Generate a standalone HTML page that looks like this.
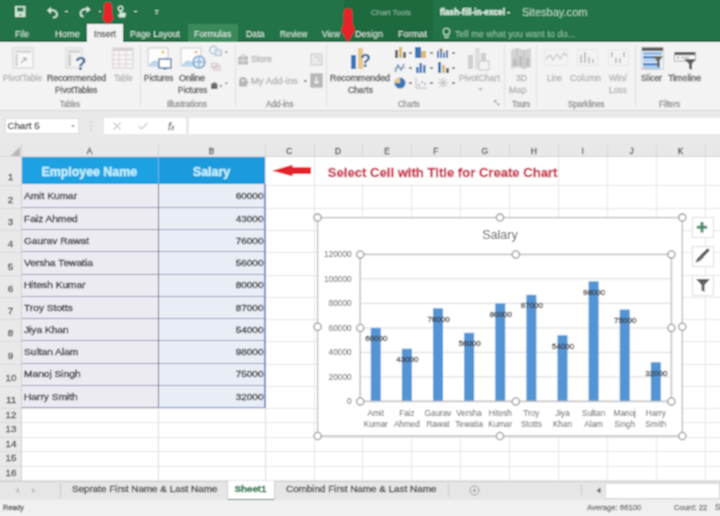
<!DOCTYPE html>
<html><head><meta charset="utf-8"><style>
html,body{margin:0;padding:0;width:720px;height:516px;overflow:hidden;background:#fff;font-family:"Liberation Sans", sans-serif;}
#root{position:relative;width:720px;height:516px;overflow:hidden;filter:url(#bl);}
#root div{-webkit-text-stroke:0.3px currentColor;}
</style></head><body><svg width="0" height="0" style="position:absolute"><filter id="bl" x="0" y="0" width="720" height="516" filterUnits="userSpaceOnUse"><feConvolveMatrix order="3" kernelMatrix="1 2 1 2 4 2 1 2 1" divisor="16" edgeMode="duplicate"/></filter></svg><div id="root">
<div style="position:absolute;left:0px;top:0px;width:720px;height:41.5px;background:#217346"></div><div style="position:absolute;left:0px;top:40px;width:720px;height:1.5px;background:#1c6840"></div><div style="position:absolute;left:344px;top:0px;width:89px;height:41.5px;background:#1d6a3e"></div><svg style="position:absolute;left:14px;top:5px;" width="13" height="13" viewBox="0 0 13 13"><rect x="1" y="1" width="10.5" height="11" fill="#cfe6d6"/><rect x="3" y="2.5" width="6.5" height="4" fill="#2a7a4e"/><rect x="5.5" y="9" width="2" height="1.5" fill="#2a7a4e"/></svg><svg style="position:absolute;left:45px;top:5px;" width="14" height="14" viewBox="0 0 14 14"><path d="M2 5.5 L6 2 L6 9 Z" fill="#d3e8da"/><path d="M5 5.5 C9 4.5 12 6.5 12 9 C12 11.5 10 12.5 8 12.5" fill="none" stroke="#d3e8da" stroke-width="1.8"/></svg><div style="position:absolute;left:65px;top:11px;width:2.5px;height:1.2px;background:#c5dfce"></div><svg style="position:absolute;left:79px;top:5px;" width="13" height="13" viewBox="0 0 13 13"><path d="M11.5 4.5 L7.5 1 L7.5 8 Z" fill="#d3e8da"/><path d="M8.5 4.5 C4.5 3.5 1.5 5.5 1.5 8 C1.5 10.5 3 11.5 4.5 11.5" fill="none" stroke="#d3e8da" stroke-width="1.8"/></svg><div style="position:absolute;left:98.5px;top:11px;width:2.5px;height:1.2px;background:#c5dfce"></div><svg style="position:absolute;left:115.5px;top:4.5px;" width="11" height="13" viewBox="0 0 11 13"><circle cx="4.5" cy="3.5" r="2.3" fill="none" stroke="#d3e8da" stroke-width="1.3"/><path d="M3.5 5 V10 L1.5 9 L3 12.5 H9 L10 9 Q10 7.5 8 7.5 H5.5 V5 Z" fill="#d3e8da"/></svg><div style="position:absolute;left:133.5px;top:11px;width:3px;height:1.2px;background:#c5dfce"></div><svg style="position:absolute;left:154.5px;top:9.5px;" width="4" height="5" viewBox="0 0 4 5"><rect x="0" y="0" width="3.5" height="1" fill="#c5dfce"/><path d="M0 2.5 L3.5 2.5 L1.75 4.5 Z" fill="#c5dfce"/></svg><div style="position:absolute;left:371.0px;top:8.24px;line-height:9.53px;font-size:7.94px;color:#92c2a3;font-weight:400;white-space:nowrap;-webkit-text-stroke:0;">Chart Tools</div><div style="position:absolute;left:440.0px;top:7.56px;line-height:9.89px;font-size:8.24px;color:#e3f1e8;font-weight:700;white-space:nowrap;">flash-fill-in-excel -</div><div style="position:absolute;left:522.0px;top:6.37px;line-height:13.26px;font-size:11.05px;color:#b9dcc5;font-weight:400;white-space:nowrap;-webkit-text-stroke:0;">Sitesbay.com</div><div style="position:absolute;left:15.0px;top:28.60px;line-height:10.80px;font-size:9.0px;color:#e8f3ec;font-weight:400;white-space:nowrap;-webkit-text-stroke:0;transform:scaleX(0.9662);transform-origin:0 50%;">File</div><div style="position:absolute;left:54.5px;top:28.60px;line-height:10.80px;font-size:9.0px;color:#e8f3ec;font-weight:400;white-space:nowrap;-webkit-text-stroke:0;transform:scaleX(1.0404);transform-origin:0 50%;">Home</div><div style="position:absolute;left:87px;top:23.5px;width:36px;height:19px;background:#f3f3f3"></div><div style="position:absolute;left:94.0px;top:28.60px;line-height:10.80px;font-size:9.0px;color:#555;font-weight:400;white-space:nowrap;transform:scaleX(0.9778);transform-origin:0 50%;">Insert</div><div style="position:absolute;left:130.0px;top:28.60px;line-height:10.80px;font-size:9.0px;color:#e8f3ec;font-weight:400;white-space:nowrap;-webkit-text-stroke:0;transform:scaleX(0.9885);transform-origin:0 50%;">Page Layout</div><div style="position:absolute;left:187.5px;top:24px;width:50.5px;height:17.5px;background:#3b8a5c"></div><div style="position:absolute;left:193.75px;top:28.60px;line-height:10.80px;font-size:9.0px;color:#e8f3ec;font-weight:400;white-space:nowrap;-webkit-text-stroke:0;transform:scaleX(0.9925);transform-origin:0 50%;">Formulas</div><div style="position:absolute;left:246.0px;top:28.60px;line-height:10.80px;font-size:9.0px;color:#e8f3ec;font-weight:400;white-space:nowrap;-webkit-text-stroke:0;transform:scaleX(0.9696);transform-origin:0 50%;">Data</div><div style="position:absolute;left:279.5px;top:28.60px;line-height:10.80px;font-size:9.0px;color:#e8f3ec;font-weight:400;white-space:nowrap;-webkit-text-stroke:0;transform:scaleX(0.9287);transform-origin:0 50%;">Review</div><div style="position:absolute;left:322.0px;top:28.60px;line-height:10.80px;font-size:9.0px;color:#e8f3ec;font-weight:400;white-space:nowrap;-webkit-text-stroke:0;transform:scaleX(0.9259);transform-origin:0 50%;">View</div><div style="position:absolute;left:355.0px;top:28.60px;line-height:10.80px;font-size:9.0px;color:#e8f3ec;font-weight:400;white-space:nowrap;-webkit-text-stroke:0;transform:scaleX(1.0004);transform-origin:0 50%;">Design</div><div style="position:absolute;left:398.0px;top:28.60px;line-height:10.80px;font-size:9.0px;color:#e8f3ec;font-weight:400;white-space:nowrap;-webkit-text-stroke:0;transform:scaleX(1.0165);transform-origin:0 50%;">Format</div><svg style="position:absolute;left:442px;top:27px;" width="9" height="13" viewBox="0 0 9 13"><circle cx="4.5" cy="4.5" r="3.3" fill="none" stroke="#bfe0cb" stroke-width="1.1"/><path d="M3 8 L3 10.5 L6 10.5 L6 8" fill="none" stroke="#bfe0cb" stroke-width="1.1"/></svg><div style="position:absolute;left:455.0px;top:28.60px;line-height:10.80px;font-size:9.0px;color:#98c6a9;font-weight:400;white-space:nowrap;-webkit-text-stroke:0;transform:scaleX(1.0124);transform-origin:0 50%;">Tell me what you want to do...</div><div style="position:absolute;left:0px;top:41.5px;width:720px;height:68.5px;background:#f3f3f3"></div><div style="position:absolute;left:0px;top:109.5px;width:720px;height:1px;background:#d6d6d6"></div><div style="position:absolute;left:139.5px;top:45px;width:1px;height:62px;background:#e0e0e0"></div><div style="position:absolute;left:235px;top:45px;width:1px;height:62px;background:#e0e0e0"></div><div style="position:absolute;left:326px;top:45px;width:1px;height:62px;background:#e0e0e0"></div><div style="position:absolute;left:503.5px;top:45px;width:1px;height:62px;background:#e0e0e0"></div><div style="position:absolute;left:536px;top:45px;width:1px;height:62px;background:#e0e0e0"></div><div style="position:absolute;left:635px;top:45px;width:1px;height:62px;background:#e0e0e0"></div><svg style="position:absolute;left:12px;top:47px;" width="22" height="22" viewBox="0 0 22 22"><rect x="1" y="1" width="20" height="20" fill="#f7f7f7" stroke="#cfcfcf"/><rect x="3" y="3" width="16" height="3" fill="#d8d8d8"/><rect x="3" y="7" width="3" height="12" fill="#d8d8d8"/><path d="M9 16 L14 11 M11 11 L14 11 L14 14" stroke="#bdbdbd" stroke-width="1.5" fill="none"/></svg><div style="position:absolute;left:3.3px;top:73.10px;line-height:10.80px;font-size:9.0px;color:#b3b3b3;font-weight:400;white-space:nowrap;transform:scaleX(0.9448);transform-origin:0 50%;">PivotTable</div><svg style="position:absolute;left:65px;top:47px;" width="24" height="23" viewBox="0 0 24 23"><rect x="1" y="1" width="16" height="20" fill="#f3f3f3" stroke="#d3d3d3"/><rect x="3" y="3" width="12" height="3" fill="#d6d6d6"/><rect x="3" y="7" width="3" height="12" fill="#cfcfcf"/><text x="10" y="22.5" font-family="Liberation Sans" font-weight="700" font-size="19" fill="#3f6a94">?</text></svg><div style="position:absolute;left:46.7px;top:73.10px;line-height:10.80px;font-size:9.0px;color:#505050;font-weight:400;white-space:nowrap;transform:scaleX(0.9685);transform-origin:0 50%;">Recommended</div><div style="position:absolute;left:55.0px;top:85.40px;line-height:10.80px;font-size:9.0px;color:#505050;font-weight:400;white-space:nowrap;transform:scaleX(0.9241);transform-origin:0 50%;">PivotTables</div><div style="position:absolute;left:60.0px;top:99.68px;line-height:9.84px;font-size:8.2px;color:#8e8e8e;font-weight:400;white-space:nowrap;transform:scaleX(0.8440);transform-origin:0 50%;">Tables</div><svg style="position:absolute;left:112px;top:47px;" width="22" height="22" viewBox="0 0 22 22"><rect x="1" y="1" width="20" height="20" fill="#f8f5f6" stroke="#d6d0d3"/><rect x="1" y="1" width="20" height="3" fill="#d8d2d5"/><path d="M1 8 H21 M1 12.5 H21 M1 17 H21 M7 1 V21 M14 1 V21" stroke="#ddd3d7" stroke-width="1"/></svg><div style="position:absolute;left:114.0px;top:73.10px;line-height:10.80px;font-size:9.0px;color:#b3b3b3;font-weight:400;white-space:nowrap;transform:scaleX(0.8601);transform-origin:0 50%;">Table</div><svg style="position:absolute;left:147px;top:47px;" width="25" height="23" viewBox="0 0 25 23"><rect x="1" y="1" width="20" height="18" fill="#fdfdfd" stroke="#c9c9c9"/><circle cx="16" cy="5" r="1.5" fill="#e3c26a"/><path d="M2 18 Q7 11 12 15 L20 10 V19 H2 Z" fill="#bcd6ee"/><rect x="12" y="12" width="12" height="9" fill="#fff" stroke="#5b7fa8" stroke-width="1.4"/><rect x="16" y="21" width="4" height="1.5" fill="#5b7fa8"/></svg><div style="position:absolute;left:144.0px;top:73.10px;line-height:10.80px;font-size:9.0px;color:#505050;font-weight:400;white-space:nowrap;transform:scaleX(0.9018);transform-origin:0 50%;">Pictures</div><svg style="position:absolute;left:180px;top:47px;" width="26" height="23" viewBox="0 0 26 23"><rect x="1" y="1" width="20" height="18" fill="#fdfdfd" stroke="#c9c9c9"/><circle cx="16" cy="5" r="1.5" fill="#e3c26a"/><path d="M2 18 Q7 11 12 15 L20 10 V19 H2 Z" fill="#bcd6ee"/><circle cx="19" cy="15" r="6" fill="#d9e8f6" stroke="#6d95c2" stroke-width="1.2"/><path d="M19 9 V21 M13 15 H25" stroke="#6d95c2" stroke-width="0.8"/></svg><div style="position:absolute;left:179.0px;top:73.10px;line-height:10.80px;font-size:9.0px;color:#505050;font-weight:400;white-space:nowrap;transform:scaleX(0.9996);transform-origin:0 50%;">Online</div><div style="position:absolute;left:177.5px;top:85.40px;line-height:10.80px;font-size:9.0px;color:#505050;font-weight:400;white-space:nowrap;transform:scaleX(0.8987);transform-origin:0 50%;">Pictures</div><svg style="position:absolute;left:208px;top:45px;" width="22" height="46" viewBox="0 0 22 46"><circle cx="5.5" cy="5" r="3.8" fill="none" stroke="#b5c6d8" stroke-width="1.4"/><rect x="7" y="5" width="6.5" height="5.5" fill="#dfe7ef" stroke="#b5c6d8" stroke-width="1.2"/><rect x="17" y="6.5" width="2.5" height="1.5" fill="#8a8a8a"/><rect x="3.5" y="18.5" width="6" height="4" fill="none" stroke="#d3bfc8" stroke-width="1.1"/><rect x="6" y="21" width="6" height="4" fill="none" stroke="#d3bfc8" stroke-width="1.1"/><rect x="3" y="38.5" width="6.5" height="5.5" fill="#6a6a6a"/><rect x="5" y="37.5" width="3" height="1.5" fill="#6a6a6a"/><rect x="12" y="40" width="2" height="2" fill="#888"/><rect x="17" y="37.5" width="2.5" height="1.5" fill="#8a8a8a"/></svg><div style="position:absolute;left:166.7px;top:99.68px;line-height:9.84px;font-size:8.2px;color:#8e8e8e;font-weight:400;white-space:nowrap;transform:scaleX(0.9640);transform-origin:0 50%;">Illustrations</div><svg style="position:absolute;left:237px;top:54px;" width="12" height="11" viewBox="0 0 12 11"><path d="M1 3 L11 2 L11 10.5 L1 10.5 Z" fill="#bdbdbd"/><path d="M4 3 Q4 0.5 6 0.5 Q8 0.5 8 2.5" stroke="#bdbdbd" fill="none"/><path d="M6 3 V10.5 M1 6.5 H11" stroke="#e6e6e6" stroke-width="0.8"/></svg><div style="position:absolute;left:250.8px;top:53.60px;line-height:10.80px;font-size:9.0px;color:#b3b3b3;font-weight:400;white-space:nowrap;transform:scaleX(0.9716);transform-origin:0 50%;">Store</div><svg style="position:absolute;left:237px;top:76px;" width="13" height="11" viewBox="0 0 13 11"><path d="M2 10.5 L2 5 Q2 1 6 1 Q10 1 10 5 L12 6 L10 8 L10 10.5 Z" fill="#b5b5b5"/><circle cx="6" cy="4.5" r="1.5" fill="#e0e0e0"/></svg><div style="position:absolute;left:250.8px;top:75.90px;line-height:10.80px;font-size:9.0px;color:#b3b3b3;font-weight:400;white-space:nowrap;transform:scaleX(1.0483);transform-origin:0 50%;">My Add-ins</div><svg style="position:absolute;left:303.5px;top:80px;" width="3" height="3" viewBox="0 0 3 3"><rect x="0" y="0" width="2.5" height="2" fill="#888"/></svg><svg style="position:absolute;left:310px;top:53px;" width="13" height="13" viewBox="0 0 13 13"><rect x="1" y="1" width="11" height="11" fill="#eaeaea" stroke="#c8c8c8"/><path d="M4 4 h5 v5" stroke="#c8c8c8" fill="none"/></svg><svg style="position:absolute;left:310px;top:73px;" width="13" height="15" viewBox="0 0 13 15"><rect x="1" y="1" width="11" height="13" fill="#b9b9b9" stroke="#aaa"/><path d="M6.5 4 v6 M4 8 l2.5 2.5 l2.5 -2.5" stroke="#fff" fill="none"/></svg><div style="position:absolute;left:265.8px;top:99.68px;line-height:9.84px;font-size:8.2px;color:#8e8e8e;font-weight:400;white-space:nowrap;transform:scaleX(0.9893);transform-origin:0 50%;">Add-ins</div><svg style="position:absolute;left:350px;top:47px;" width="24" height="24" viewBox="0 0 24 24"><rect x="1" y="8" width="5" height="14" fill="#3d77b8"/><rect x="8" y="1" width="5" height="21" fill="#e8c98a"/><text x="10" y="20" font-family="Liberation Sans" font-weight="700" font-size="18" fill="#3d6b9e">?</text></svg><div style="position:absolute;left:330.0px;top:73.10px;line-height:10.80px;font-size:9.0px;color:#505050;font-weight:400;white-space:nowrap;transform:scaleX(0.9833);transform-origin:0 50%;">Recommended</div><div style="position:absolute;left:347.5px;top:85.40px;line-height:10.80px;font-size:9.0px;color:#505050;font-weight:400;white-space:nowrap;transform:scaleX(0.9416);transform-origin:0 50%;">Charts</div><svg style="position:absolute;left:394px;top:47px;" width="12" height="12" viewBox="0 0 12 12"><rect x="1" y="3" width="3" height="8" fill="#6b6b6b"/><rect x="5" y="0" width="3" height="11" fill="#d9b878"/><rect x="9" y="5" width="3" height="6" fill="#6b6b6b"/></svg><svg style="position:absolute;left:409px;top:52px;" width="3" height="2" viewBox="0 0 3 2"><rect x="0" y="0" width="3" height="2" fill="#888"/></svg><svg style="position:absolute;left:415px;top:47px;" width="12" height="12" viewBox="0 0 12 12"><rect x="0" y="0" width="6" height="11" fill="#3d77b8"/><rect x="6" y="4" width="5" height="7" fill="#d9b878"/></svg><svg style="position:absolute;left:430px;top:52px;" width="3" height="2" viewBox="0 0 3 2"><rect x="0" y="0" width="3" height="2" fill="#888"/></svg><svg style="position:absolute;left:437px;top:47px;" width="12" height="12" viewBox="0 0 12 12"><path d="M1 11 V4 M4 11 V1 M7 11 V6 M10 11 V3" stroke="#3d77b8" stroke-width="2"/><path d="M1 4 L4 1 L7 6 L10 3" stroke="#d9b878" stroke-width="1" fill="none"/></svg><svg style="position:absolute;left:452px;top:52px;" width="3" height="2" viewBox="0 0 3 2"><rect x="0" y="0" width="3" height="2" fill="#888"/></svg><svg style="position:absolute;left:394px;top:62px;" width="12" height="12" viewBox="0 0 12 12"><path d="M1 10 L4 3 L7 8 L10 2" stroke="#3d77b8" stroke-width="1.2" fill="none"/><path d="M0 6 L12 6" stroke="#aaa" stroke-width="0.8"/></svg><svg style="position:absolute;left:409px;top:67px;" width="3" height="2" viewBox="0 0 3 2"><rect x="0" y="0" width="3" height="2" fill="#888"/></svg><svg style="position:absolute;left:415px;top:62px;" width="12" height="12" viewBox="0 0 12 12"><rect x="1" y="5" width="2.5" height="6" fill="#3d77b8"/><rect x="4.5" y="1" width="2.5" height="10" fill="#3d77b8"/><rect x="8" y="3" width="2.5" height="8" fill="#3d77b8"/></svg><svg style="position:absolute;left:430px;top:67px;" width="3" height="2" viewBox="0 0 3 2"><rect x="0" y="0" width="3" height="2" fill="#888"/></svg><svg style="position:absolute;left:437px;top:62px;" width="12" height="12" viewBox="0 0 12 12"><rect x="1" y="0" width="3" height="11" fill="#3d77b8"/><rect x="5" y="3" width="3" height="8" fill="#d9b878"/><rect x="9" y="6" width="3" height="5" fill="#6b6b6b"/></svg><svg style="position:absolute;left:452px;top:67px;" width="3" height="2" viewBox="0 0 3 2"><rect x="0" y="0" width="3" height="2" fill="#888"/></svg><svg style="position:absolute;left:394px;top:77px;" width="12" height="12" viewBox="0 0 12 12"><circle cx="6" cy="6" r="5.5" fill="#3d77b8"/><path d="M6 6 L6 0.5 A5.5 5.5 0 0 0 0.5 6 Z" fill="#e8c98a"/></svg><svg style="position:absolute;left:409px;top:82px;" width="3" height="2" viewBox="0 0 3 2"><rect x="0" y="0" width="3" height="2" fill="#888"/></svg><svg style="position:absolute;left:415px;top:77px;" width="12" height="12" viewBox="0 0 12 12"><path d="M1 1 V11 H12" stroke="#bbb" stroke-width="1" fill="none"/><circle cx="4" cy="8" r="1" fill="#9ab"/><circle cx="7" cy="5" r="1" fill="#9ab"/><circle cx="10" cy="7" r="1" fill="#9ab"/></svg><svg style="position:absolute;left:430px;top:82px;" width="3" height="2" viewBox="0 0 3 2"><rect x="0" y="0" width="3" height="2" fill="#888"/></svg><svg style="position:absolute;left:437px;top:77px;" width="12" height="12" viewBox="0 0 12 12"><path d="M6 1 L6 11 M1 6 L11 6 M2 2 L10 10 M10 2 L2 10" stroke="#bbb" stroke-width="1"/></svg><svg style="position:absolute;left:452px;top:82px;" width="3" height="2" viewBox="0 0 3 2"><rect x="0" y="0" width="3" height="2" fill="#888"/></svg><div style="position:absolute;left:398.3px;top:99.68px;line-height:9.84px;font-size:8.2px;color:#8e8e8e;font-weight:400;white-space:nowrap;transform:scaleX(0.8971);transform-origin:0 50%;">Charts</div><svg style="position:absolute;left:467px;top:47px;" width="25" height="24" viewBox="0 0 25 24"><rect x="1" y="8" width="5" height="14" fill="#cfcfcf"/><rect x="8" y="1" width="5" height="21" fill="#dedede"/><rect x="14" y="6" width="5" height="8" fill="#cfcfcf"/><rect x="12" y="14" width="10" height="9" fill="#f3f3f3" stroke="#c8c8c8"/></svg><div style="position:absolute;left:459.0px;top:73.10px;line-height:10.80px;font-size:9.0px;color:#b3b3b3;font-weight:400;white-space:nowrap;transform:scaleX(0.9755);transform-origin:0 50%;">PivotChart</div><svg style="position:absolute;left:478px;top:88px;" width="5" height="3" viewBox="0 0 5 3"><path d="M0 0 L5 0 L2.5 3 Z" fill="#bbb"/></svg><svg style="position:absolute;left:494px;top:100px;" width="6" height="6" viewBox="0 0 6 6"><path d="M0.5 0.5 H3 M0.5 0.5 V3 M1 1 L5 5 M5 3 V5 H3" stroke="#999" stroke-width="0.8" fill="none"/></svg><svg style="position:absolute;left:510px;top:47px;" width="22" height="23" viewBox="0 0 22 23"><path d="M1 3 L7 1 L14 3 L21 1 V20 L14 22 L7 20 L1 22 Z" fill="#d3d3d3"/><path d="M7 1 V20 M14 3 V22" stroke="#bdbdbd"/><rect x="3" y="12" width="3" height="7" fill="#bcbcbc"/><rect x="9" y="9" width="3" height="10" fill="#bcbcbc"/><rect x="16" y="11" width="3" height="8" fill="#bcbcbc"/></svg><div style="position:absolute;left:515.8px;top:73.10px;line-height:10.80px;font-size:9.0px;color:#b3b3b3;font-weight:400;white-space:nowrap;transform:scaleX(0.9462);transform-origin:0 50%;">3D</div><div style="position:absolute;left:509.0px;top:85.40px;line-height:10.80px;font-size:9.0px;color:#b3b3b3;font-weight:400;white-space:nowrap;transform:scaleX(1.0085);transform-origin:0 50%;">Map</div><div style="position:absolute;left:511.7px;top:99.68px;line-height:9.84px;font-size:8.2px;color:#8e8e8e;font-weight:400;white-space:nowrap;transform:scaleX(0.9109);transform-origin:0 50%;">Tours</div><svg style="position:absolute;left:544px;top:49px;" width="24" height="17" viewBox="0 0 24 17"><rect x="0.5" y="0.5" width="23" height="16" fill="none" stroke="#e6e6e6"/><path d="M2 10 L6 6 L9 11 L13 5 L16 10 L20 4 L23 7" stroke="#c4c4c4" stroke-width="1.2" fill="none"/></svg><div style="position:absolute;left:546.7px;top:73.10px;line-height:10.80px;font-size:9.0px;color:#b3b3b3;font-weight:400;white-space:nowrap;transform:scaleX(0.8818);transform-origin:0 50%;">Line</div><svg style="position:absolute;left:577px;top:49px;" width="21" height="17" viewBox="0 0 21 17"><rect x="0.5" y="0.5" width="20" height="16" fill="none" stroke="#e6e6e6"/><rect x="3" y="6" width="2" height="8" fill="#c4c4c4"/><rect x="7" y="3" width="2" height="11" fill="#c4c4c4"/><rect x="11" y="8" width="2" height="6" fill="#c4c4c4"/><rect x="15" y="10" width="2" height="4" fill="#c4c4c4"/></svg><div style="position:absolute;left:570.0px;top:73.10px;line-height:10.80px;font-size:9.0px;color:#b3b3b3;font-weight:400;white-space:nowrap;transform:scaleX(0.9984);transform-origin:0 50%;">Column</div><svg style="position:absolute;left:608px;top:49px;" width="21" height="17" viewBox="0 0 21 17"><rect x="0.5" y="0.5" width="20" height="16" fill="none" stroke="#e6e6e6"/><rect x="3" y="3" width="2" height="5" fill="#c4c4c4"/><rect x="7" y="9" width="2" height="5" fill="#c4c4c4"/><rect x="11" y="9" width="2" height="5" fill="#c4c4c4"/><rect x="15" y="3" width="2" height="5" fill="#c4c4c4"/></svg><div style="position:absolute;left:609.0px;top:73.10px;line-height:10.80px;font-size:9.0px;color:#b3b3b3;font-weight:400;white-space:nowrap;transform:scaleX(0.9833);transform-origin:0 50%;">Win/</div><div style="position:absolute;left:609.0px;top:85.40px;line-height:10.80px;font-size:9.0px;color:#b3b3b3;font-weight:400;white-space:nowrap;transform:scaleX(0.9321);transform-origin:0 50%;">Loss</div><div style="position:absolute;left:567.8px;top:99.68px;line-height:9.84px;font-size:8.2px;color:#8e8e8e;font-weight:400;white-space:nowrap;transform:scaleX(0.9558);transform-origin:0 50%;">Sparklines</div><svg style="position:absolute;left:640.5px;top:47px;" width="23" height="23" viewBox="0 0 23 23"><rect x="0.5" y="0.5" width="22" height="22" fill="#eef3f8" stroke="#c8d0d8"/><rect x="1" y="0.5" width="21" height="3.5" fill="#5f5f5f"/><rect x="2" y="5" width="19" height="3" fill="#8fbbe6"/><rect x="2" y="9" width="17" height="2.5" fill="#3f7fc4"/><rect x="2" y="12.5" width="17" height="2.5" fill="#a9cdee"/><rect x="2" y="16" width="17" height="2.5" fill="#3f7fc4"/><rect x="2" y="19" width="17" height="3" fill="#a9cdee"/><rect x="1" y="21.5" width="8" height="1" fill="#f0c0a0"/><path d="M12 9 L22 9 L18.5 14 V21 L16 19.5 V14 Z" fill="#6a6a6a"/></svg><div style="position:absolute;left:641.0px;top:73.10px;line-height:10.80px;font-size:9.0px;color:#505050;font-weight:400;white-space:nowrap;transform:scaleX(0.9333);transform-origin:0 50%;">Slicer</div><svg style="position:absolute;left:673.5px;top:51px;" width="22" height="20" viewBox="0 0 22 20"><rect x="0.5" y="1" width="21" height="3" fill="#5a5a5a"/><rect x="0.5" y="4" width="21" height="6" fill="#fafafa" stroke="#9a9a9a" stroke-width="0.8"/><rect x="3" y="6" width="2" height="1.5" fill="#777"/><rect x="7" y="6" width="8" height="1.2" fill="#aaa"/><path d="M10 8 L21.5 8 L18 13 V19 L15 17.5 V13 Z" fill="#5f5f5f"/></svg><div style="position:absolute;left:667.8px;top:73.10px;line-height:10.80px;font-size:9.0px;color:#505050;font-weight:400;white-space:nowrap;transform:scaleX(0.9863);transform-origin:0 50%;">Timeline</div><div style="position:absolute;left:658.9px;top:99.68px;line-height:9.84px;font-size:8.2px;color:#8e8e8e;font-weight:400;white-space:nowrap;transform:scaleX(0.9460);transform-origin:0 50%;">Filters</div><div style="position:absolute;left:0px;top:110.5px;width:720px;height:33px;background:#e9e9e9"></div><div style="position:absolute;left:4.5px;top:118px;width:74.5px;height:15.5px;background:#fff;border:1px solid #dcdcdc;box-sizing:border-box"></div><div style="position:absolute;left:7.5px;top:120.32px;line-height:11.76px;font-size:9.8px;color:#404040;font-weight:400;white-space:nowrap;">Chart 5</div><svg style="position:absolute;left:71px;top:125px;" width="4" height="3" viewBox="0 0 4 3"><path d="M0 0 L4 0 L2 2.5 Z" fill="#999"/></svg><svg style="position:absolute;left:89px;top:120px;" width="4" height="12" viewBox="0 0 4 12"><circle cx="2" cy="2" r="0.8" fill="#bbb"/><circle cx="2" cy="6" r="0.8" fill="#bbb"/><circle cx="2" cy="10" r="0.8" fill="#bbb"/></svg><div style="position:absolute;left:104px;top:118px;width:81.5px;height:15.5px;background:#fff;"></div><svg style="position:absolute;left:112px;top:121px;" width="10" height="10" viewBox="0 0 10 10"><path d="M1.5 1.5 L8.5 8.5 M8.5 1.5 L1.5 8.5" stroke="#c6c6c6" stroke-width="1.1"/></svg><svg style="position:absolute;left:137px;top:121px;" width="12" height="10" viewBox="0 0 12 10"><path d="M1.5 5 L4.5 8 L10.5 2" stroke="#c6c6c6" stroke-width="1.1" fill="none"/></svg><div style="position:absolute;left:168px;top:119.70px;line-height:12.60px;font-size:10.5px;color:#777;font-weight:400;white-space:nowrap;font-family:"Liberation Serif",serif"><i>f<span style="font-size:6.5px">x</span></i></div><div style="position:absolute;left:189px;top:118px;width:531px;height:15.5px;background:#fff"></div><div style="position:absolute;left:0px;top:143.5px;width:720px;height:337.0px;background:#fff"></div><div style="position:absolute;left:0px;top:143.5px;width:720px;height:12.5px;background:#e8e8e8"></div><div style="position:absolute;left:0px;top:156.0px;width:720px;height:1px;background:#d4d4d4"></div><div style="position:absolute;left:158px;top:143.5px;width:1px;height:12.5px;background:#d6d6d6"></div><div style="position:absolute;left:89.5px;transform:translateX(-50%);top:146.06px;line-height:10.08px;font-size:8.4px;color:#4a4a4a;font-weight:400;white-space:nowrap;">A</div><div style="position:absolute;left:265px;top:143.5px;width:1px;height:12.5px;background:#d6d6d6"></div><div style="position:absolute;left:211.5px;transform:translateX(-50%);top:146.06px;line-height:10.08px;font-size:8.4px;color:#4a4a4a;font-weight:400;white-space:nowrap;">B</div><div style="position:absolute;left:313.5px;top:143.5px;width:1px;height:12.5px;background:#d6d6d6"></div><div style="position:absolute;left:289.25px;transform:translateX(-50%);top:146.06px;line-height:10.08px;font-size:8.4px;color:#4a4a4a;font-weight:400;white-space:nowrap;">C</div><div style="position:absolute;left:362.45px;top:143.5px;width:1px;height:12.5px;background:#d6d6d6"></div><div style="position:absolute;left:337.975px;transform:translateX(-50%);top:146.06px;line-height:10.08px;font-size:8.4px;color:#4a4a4a;font-weight:400;white-space:nowrap;">D</div><div style="position:absolute;left:411.4px;top:143.5px;width:1px;height:12.5px;background:#d6d6d6"></div><div style="position:absolute;left:386.92499999999995px;transform:translateX(-50%);top:146.06px;line-height:10.08px;font-size:8.4px;color:#4a4a4a;font-weight:400;white-space:nowrap;">E</div><div style="position:absolute;left:460.34999999999997px;top:143.5px;width:1px;height:12.5px;background:#d6d6d6"></div><div style="position:absolute;left:435.875px;transform:translateX(-50%);top:146.06px;line-height:10.08px;font-size:8.4px;color:#4a4a4a;font-weight:400;white-space:nowrap;">F</div><div style="position:absolute;left:509.29999999999995px;top:143.5px;width:1px;height:12.5px;background:#d6d6d6"></div><div style="position:absolute;left:484.82499999999993px;transform:translateX(-50%);top:146.06px;line-height:10.08px;font-size:8.4px;color:#4a4a4a;font-weight:400;white-space:nowrap;">G</div><div style="position:absolute;left:558.25px;top:143.5px;width:1px;height:12.5px;background:#d6d6d6"></div><div style="position:absolute;left:533.775px;transform:translateX(-50%);top:146.06px;line-height:10.08px;font-size:8.4px;color:#4a4a4a;font-weight:400;white-space:nowrap;">H</div><div style="position:absolute;left:607.2px;top:143.5px;width:1px;height:12.5px;background:#d6d6d6"></div><div style="position:absolute;left:582.725px;transform:translateX(-50%);top:146.06px;line-height:10.08px;font-size:8.4px;color:#4a4a4a;font-weight:400;white-space:nowrap;">I</div><div style="position:absolute;left:656.1500000000001px;top:143.5px;width:1px;height:12.5px;background:#d6d6d6"></div><div style="position:absolute;left:631.6750000000001px;transform:translateX(-50%);top:146.06px;line-height:10.08px;font-size:8.4px;color:#4a4a4a;font-weight:400;white-space:nowrap;">J</div><div style="position:absolute;left:705.1000000000001px;top:143.5px;width:1px;height:12.5px;background:#d6d6d6"></div><div style="position:absolute;left:680.6250000000001px;transform:translateX(-50%);top:146.06px;line-height:10.08px;font-size:8.4px;color:#4a4a4a;font-weight:400;white-space:nowrap;">K</div><div style="position:absolute;left:720px;top:143.5px;width:1px;height:12.5px;background:#d6d6d6"></div><div style="position:absolute;left:0px;top:143.5px;width:21px;height:12.5px;background:#e8e8e8"></div><svg style="position:absolute;left:10px;top:145.5px;" width="11" height="11" viewBox="0 0 11 11"><path d="M10 0.5 L10 10 L0.5 10 Z" fill="#b8b8b8"/></svg><div style="position:absolute;left:21px;top:143.5px;width:1px;height:12.5px;background:#cfcfcf"></div><div style="position:absolute;left:0px;top:156.5px;width:21px;height:324.0px;background:#e9e9e9"></div><div style="position:absolute;left:21px;top:156.5px;width:1px;height:324.0px;background:#cfcfcf"></div><div style="position:absolute;left:0px;top:184.5px;width:21px;height:1px;background:#d9d9d9"></div><div style="position:absolute;left:22px;top:184.5px;width:698px;height:1px;background:#e6e6e6"></div><div style="position:absolute;left:10.5px;transform:translateX(-50%);top:171.36px;line-height:11.88px;font-size:9.9px;color:#4a4a4a;font-weight:400;white-space:nowrap;">1</div><div style="position:absolute;left:0px;top:207.5px;width:21px;height:1px;background:#d9d9d9"></div><div style="position:absolute;left:22px;top:207.5px;width:698px;height:1px;background:#e6e6e6"></div><div style="position:absolute;left:10.5px;transform:translateX(-50%);top:194.36px;line-height:11.88px;font-size:9.9px;color:#4a4a4a;font-weight:400;white-space:nowrap;">2</div><div style="position:absolute;left:0px;top:229.5px;width:21px;height:1px;background:#d9d9d9"></div><div style="position:absolute;left:22px;top:229.5px;width:698px;height:1px;background:#e6e6e6"></div><div style="position:absolute;left:10.5px;transform:translateX(-50%);top:216.36px;line-height:11.88px;font-size:9.9px;color:#4a4a4a;font-weight:400;white-space:nowrap;">3</div><div style="position:absolute;left:0px;top:251.5px;width:21px;height:1px;background:#d9d9d9"></div><div style="position:absolute;left:22px;top:251.5px;width:698px;height:1px;background:#e6e6e6"></div><div style="position:absolute;left:10.5px;transform:translateX(-50%);top:238.36px;line-height:11.88px;font-size:9.9px;color:#4a4a4a;font-weight:400;white-space:nowrap;">4</div><div style="position:absolute;left:0px;top:274.5px;width:21px;height:1px;background:#d9d9d9"></div><div style="position:absolute;left:22px;top:274.5px;width:698px;height:1px;background:#e6e6e6"></div><div style="position:absolute;left:10.5px;transform:translateX(-50%);top:261.36px;line-height:11.88px;font-size:9.9px;color:#4a4a4a;font-weight:400;white-space:nowrap;">5</div><div style="position:absolute;left:0px;top:296.5px;width:21px;height:1px;background:#d9d9d9"></div><div style="position:absolute;left:22px;top:296.5px;width:698px;height:1px;background:#e6e6e6"></div><div style="position:absolute;left:10.5px;transform:translateX(-50%);top:283.36px;line-height:11.88px;font-size:9.9px;color:#4a4a4a;font-weight:400;white-space:nowrap;">6</div><div style="position:absolute;left:0px;top:318.5px;width:21px;height:1px;background:#d9d9d9"></div><div style="position:absolute;left:22px;top:318.5px;width:698px;height:1px;background:#e6e6e6"></div><div style="position:absolute;left:10.5px;transform:translateX(-50%);top:305.36px;line-height:11.88px;font-size:9.9px;color:#4a4a4a;font-weight:400;white-space:nowrap;">7</div><div style="position:absolute;left:0px;top:340.5px;width:21px;height:1px;background:#d9d9d9"></div><div style="position:absolute;left:22px;top:340.5px;width:698px;height:1px;background:#e6e6e6"></div><div style="position:absolute;left:10.5px;transform:translateX(-50%);top:327.36px;line-height:11.88px;font-size:9.9px;color:#4a4a4a;font-weight:400;white-space:nowrap;">8</div><div style="position:absolute;left:0px;top:363.5px;width:21px;height:1px;background:#d9d9d9"></div><div style="position:absolute;left:22px;top:363.5px;width:698px;height:1px;background:#e6e6e6"></div><div style="position:absolute;left:10.5px;transform:translateX(-50%);top:350.36px;line-height:11.88px;font-size:9.9px;color:#4a4a4a;font-weight:400;white-space:nowrap;">9</div><div style="position:absolute;left:0px;top:385.5px;width:21px;height:1px;background:#d9d9d9"></div><div style="position:absolute;left:22px;top:385.5px;width:698px;height:1px;background:#e6e6e6"></div><div style="position:absolute;left:11px;transform:translateX(-50%);top:372.36px;line-height:11.88px;font-size:9.9px;color:#4a4a4a;font-weight:400;white-space:nowrap;">10</div><div style="position:absolute;left:0px;top:407.5px;width:21px;height:1px;background:#d9d9d9"></div><div style="position:absolute;left:22px;top:407.5px;width:698px;height:1px;background:#e6e6e6"></div><div style="position:absolute;left:11px;transform:translateX(-50%);top:394.36px;line-height:11.88px;font-size:9.9px;color:#4a4a4a;font-weight:400;white-space:nowrap;">11</div><div style="position:absolute;left:0px;top:422.0px;width:21px;height:1px;background:#d9d9d9"></div><div style="position:absolute;left:22px;top:422.0px;width:698px;height:1px;background:#e6e6e6"></div><div style="position:absolute;left:11px;transform:translateX(-50%);top:408.86px;line-height:11.88px;font-size:9.9px;color:#4a4a4a;font-weight:400;white-space:nowrap;">12</div><div style="position:absolute;left:0px;top:436.5px;width:21px;height:1px;background:#d9d9d9"></div><div style="position:absolute;left:22px;top:436.5px;width:698px;height:1px;background:#e6e6e6"></div><div style="position:absolute;left:11px;transform:translateX(-50%);top:423.36px;line-height:11.88px;font-size:9.9px;color:#4a4a4a;font-weight:400;white-space:nowrap;">13</div><div style="position:absolute;left:0px;top:451.0px;width:21px;height:1px;background:#d9d9d9"></div><div style="position:absolute;left:22px;top:451.0px;width:698px;height:1px;background:#e6e6e6"></div><div style="position:absolute;left:11px;transform:translateX(-50%);top:437.86px;line-height:11.88px;font-size:9.9px;color:#4a4a4a;font-weight:400;white-space:nowrap;">14</div><div style="position:absolute;left:0px;top:465.5px;width:21px;height:1px;background:#d9d9d9"></div><div style="position:absolute;left:22px;top:465.5px;width:698px;height:1px;background:#e6e6e6"></div><div style="position:absolute;left:11px;transform:translateX(-50%);top:452.36px;line-height:11.88px;font-size:9.9px;color:#4a4a4a;font-weight:400;white-space:nowrap;">15</div><div style="position:absolute;left:0px;top:480.0px;width:21px;height:1px;background:#d9d9d9"></div><div style="position:absolute;left:22px;top:480.0px;width:698px;height:1px;background:#e6e6e6"></div><div style="position:absolute;left:11px;transform:translateX(-50%);top:466.86px;line-height:11.88px;font-size:9.9px;color:#4a4a4a;font-weight:400;white-space:nowrap;">16</div><div style="position:absolute;left:313.5px;top:156.5px;width:1px;height:324.0px;background:#e6e6e6"></div><div style="position:absolute;left:362.45px;top:156.5px;width:1px;height:324.0px;background:#e6e6e6"></div><div style="position:absolute;left:411.4px;top:156.5px;width:1px;height:324.0px;background:#e6e6e6"></div><div style="position:absolute;left:460.34999999999997px;top:156.5px;width:1px;height:324.0px;background:#e6e6e6"></div><div style="position:absolute;left:509.29999999999995px;top:156.5px;width:1px;height:324.0px;background:#e6e6e6"></div><div style="position:absolute;left:558.25px;top:156.5px;width:1px;height:324.0px;background:#e6e6e6"></div><div style="position:absolute;left:607.2px;top:156.5px;width:1px;height:324.0px;background:#e6e6e6"></div><div style="position:absolute;left:656.1500000000001px;top:156.5px;width:1px;height:324.0px;background:#e6e6e6"></div><div style="position:absolute;left:705.1000000000001px;top:156.5px;width:1px;height:324.0px;background:#e6e6e6"></div><div style="position:absolute;left:720px;top:156.5px;width:1px;height:324.0px;background:#e6e6e6"></div><div style="position:absolute;left:158px;top:156.5px;width:1px;height:324.0px;background:#dedede"></div><div style="position:absolute;left:265px;top:156.5px;width:1px;height:324.0px;background:#dedede"></div><div style="position:absolute;left:22px;top:156.5px;width:136px;height:27.9px;background:#1ba1e2"></div><div style="position:absolute;left:158px;top:156.5px;width:107px;height:27.9px;background:#1c9ade"></div><div style="position:absolute;left:157.6px;top:157px;width:1.2px;height:27.5px;background:#62b6e8"></div><div style="position:absolute;left:41.4px;top:164.76px;line-height:14.88px;font-size:12.4px;color:#c9f1ff;font-weight:700;white-space:nowrap;">Employee Name</div><div style="position:absolute;left:211.5px;transform:translateX(-50%);top:164.76px;line-height:14.88px;font-size:12.4px;color:#c9f1ff;font-weight:700;white-space:nowrap;">Salary</div><div style="position:absolute;left:22px;top:184.4px;width:136px;height:223px;background:#ecebf2"></div><div style="position:absolute;left:158px;top:184.4px;width:107px;height:223px;background:#e8edf6"></div><div style="position:absolute;left:22px;top:206.5px;width:136px;height:1.5px;background:#9d98ae"></div><div style="position:absolute;left:158px;top:206.5px;width:107px;height:1.5px;background:#9d9fbf"></div><div style="position:absolute;left:24px;top:190.25px;line-height:11.88px;font-size:9.9px;color:#2a2a2a;font-weight:400;white-space:nowrap;transform:scaleX(1.03);transform-origin:0 50%;">Amit Kumar</div><div style="position:absolute;right:456.5px;top:190.25px;line-height:11.88px;font-size:9.9px;color:#2a2a2a;font-weight:400;white-space:nowrap;transform:scaleX(1.01);transform-origin:100% 50%;">60000</div><div style="position:absolute;left:22px;top:228.5px;width:136px;height:1.5px;background:#9d98ae"></div><div style="position:absolute;left:158px;top:228.5px;width:107px;height:1.5px;background:#9d9fbf"></div><div style="position:absolute;left:24px;top:212.53px;line-height:11.88px;font-size:9.9px;color:#2a2a2a;font-weight:400;white-space:nowrap;transform:scaleX(1.03);transform-origin:0 50%;">Faiz Ahmed</div><div style="position:absolute;right:456.5px;top:212.53px;line-height:11.88px;font-size:9.9px;color:#2a2a2a;font-weight:400;white-space:nowrap;transform:scaleX(1.01);transform-origin:100% 50%;">43000</div><div style="position:absolute;left:22px;top:250.5px;width:136px;height:1.5px;background:#9d98ae"></div><div style="position:absolute;left:158px;top:250.5px;width:107px;height:1.5px;background:#9d9fbf"></div><div style="position:absolute;left:24px;top:234.81px;line-height:11.88px;font-size:9.9px;color:#2a2a2a;font-weight:400;white-space:nowrap;transform:scaleX(1.03);transform-origin:0 50%;">Gaurav Rawat</div><div style="position:absolute;right:456.5px;top:234.81px;line-height:11.88px;font-size:9.9px;color:#2a2a2a;font-weight:400;white-space:nowrap;transform:scaleX(1.01);transform-origin:100% 50%;">76000</div><div style="position:absolute;left:22px;top:273.5px;width:136px;height:1.5px;background:#9d98ae"></div><div style="position:absolute;left:158px;top:273.5px;width:107px;height:1.5px;background:#9d9fbf"></div><div style="position:absolute;left:24px;top:257.09px;line-height:11.88px;font-size:9.9px;color:#2a2a2a;font-weight:400;white-space:nowrap;transform:scaleX(1.03);transform-origin:0 50%;">Versha Tewatia</div><div style="position:absolute;right:456.5px;top:257.09px;line-height:11.88px;font-size:9.9px;color:#2a2a2a;font-weight:400;white-space:nowrap;transform:scaleX(1.01);transform-origin:100% 50%;">56000</div><div style="position:absolute;left:22px;top:295.5px;width:136px;height:1.5px;background:#9d98ae"></div><div style="position:absolute;left:158px;top:295.5px;width:107px;height:1.5px;background:#9d9fbf"></div><div style="position:absolute;left:24px;top:279.37px;line-height:11.88px;font-size:9.9px;color:#2a2a2a;font-weight:400;white-space:nowrap;transform:scaleX(1.03);transform-origin:0 50%;">Hitesh Kumar</div><div style="position:absolute;right:456.5px;top:279.37px;line-height:11.88px;font-size:9.9px;color:#2a2a2a;font-weight:400;white-space:nowrap;transform:scaleX(1.01);transform-origin:100% 50%;">80000</div><div style="position:absolute;left:22px;top:317.5px;width:136px;height:1.5px;background:#9d98ae"></div><div style="position:absolute;left:158px;top:317.5px;width:107px;height:1.5px;background:#9d9fbf"></div><div style="position:absolute;left:24px;top:301.65px;line-height:11.88px;font-size:9.9px;color:#2a2a2a;font-weight:400;white-space:nowrap;transform:scaleX(1.03);transform-origin:0 50%;">Troy Stotts</div><div style="position:absolute;right:456.5px;top:301.65px;line-height:11.88px;font-size:9.9px;color:#2a2a2a;font-weight:400;white-space:nowrap;transform:scaleX(1.01);transform-origin:100% 50%;">87000</div><div style="position:absolute;left:22px;top:339.5px;width:136px;height:1.5px;background:#9d98ae"></div><div style="position:absolute;left:158px;top:339.5px;width:107px;height:1.5px;background:#9d9fbf"></div><div style="position:absolute;left:24px;top:323.93px;line-height:11.88px;font-size:9.9px;color:#2a2a2a;font-weight:400;white-space:nowrap;transform:scaleX(1.03);transform-origin:0 50%;">Jiya Khan</div><div style="position:absolute;right:456.5px;top:323.93px;line-height:11.88px;font-size:9.9px;color:#2a2a2a;font-weight:400;white-space:nowrap;transform:scaleX(1.01);transform-origin:100% 50%;">54000</div><div style="position:absolute;left:22px;top:362.5px;width:136px;height:1.5px;background:#9d98ae"></div><div style="position:absolute;left:158px;top:362.5px;width:107px;height:1.5px;background:#9d9fbf"></div><div style="position:absolute;left:24px;top:346.21px;line-height:11.88px;font-size:9.9px;color:#2a2a2a;font-weight:400;white-space:nowrap;transform:scaleX(1.03);transform-origin:0 50%;">Sultan Alam</div><div style="position:absolute;right:456.5px;top:346.21px;line-height:11.88px;font-size:9.9px;color:#2a2a2a;font-weight:400;white-space:nowrap;transform:scaleX(1.01);transform-origin:100% 50%;">98000</div><div style="position:absolute;left:22px;top:384.5px;width:136px;height:1.5px;background:#9d98ae"></div><div style="position:absolute;left:158px;top:384.5px;width:107px;height:1.5px;background:#9d9fbf"></div><div style="position:absolute;left:24px;top:368.49px;line-height:11.88px;font-size:9.9px;color:#2a2a2a;font-weight:400;white-space:nowrap;transform:scaleX(1.03);transform-origin:0 50%;">Manoj Singh</div><div style="position:absolute;right:456.5px;top:368.49px;line-height:11.88px;font-size:9.9px;color:#2a2a2a;font-weight:400;white-space:nowrap;transform:scaleX(1.01);transform-origin:100% 50%;">75000</div><div style="position:absolute;left:24px;top:390.77px;line-height:11.88px;font-size:9.9px;color:#2a2a2a;font-weight:400;white-space:nowrap;transform:scaleX(1.03);transform-origin:0 50%;">Harry Smith</div><div style="position:absolute;right:456.5px;top:390.77px;line-height:11.88px;font-size:9.9px;color:#2a2a2a;font-weight:400;white-space:nowrap;transform:scaleX(1.01);transform-origin:100% 50%;">32000</div><div style="position:absolute;left:157.5px;top:184.4px;width:1.4px;height:223px;background:#6f6a86"></div><div style="position:absolute;left:264.3px;top:184.4px;width:1.4px;height:223.6px;background:#7d8ed0"></div><div style="position:absolute;left:22px;top:406.6px;width:137px;height:1.4px;background:#8f8aa6"></div><div style="position:absolute;left:158px;top:406.6px;width:107px;height:1.4px;background:#7d8ed0"></div><svg style="position:absolute;left:271px;top:164px;" width="41" height="13" viewBox="0 0 41 13"><path d="M1 6.8 L21.5 0.7 L21.5 3.3 L40 3.3 L40 10.1 L21.5 10.1 L21.5 12.3 Z" fill="#e3202b"/></svg><div style="position:absolute;left:314.5px;top:157.5px;width:243.5px;height:26.5px;background:#fff"></div><div style="position:absolute;left:327.8px;top:165.34px;line-height:15.72px;font-size:13.1px;color:#c9304a;font-weight:700;white-space:nowrap;">Select Cell with Title for Create Chart</div><svg style="position:absolute;left:100px;top:0px;" width="16" height="26" viewBox="0 0 16 26"><path d="M4.3 3.5 Q7.8 0.5 11.3 3.5 L12.3 10 Q11.3 12.5 12.3 14 Q13.8 17 13.3 19 L8 24.5 L2.7 19 Q2.2 17 3.7 14 Q4.7 12.5 3.7 10 Z" fill="#e8222c"/></svg><svg style="position:absolute;left:336px;top:0px;" width="24" height="45" viewBox="0 0 24 45"><path d="M7.8 10 Q12 6.5 16.3 10 L16.6 21 Q16 23 17 25 Q19 28 18.6 31 L12 42.5 L5.4 31 Q5 28 7 25 Q8 23 7.4 21 Z" fill="#e8222c"/></svg><div style="position:absolute;left:317.6px;top:217.6px;width:364.69999999999993px;height:218.4px;background:#fff"></div><svg style="position:absolute;left:0;top:0" width="720" height="516" viewBox="0 0 720 516"><line x1="360.2" y1="401.40" x2="671.4" y2="401.40" stroke="#d9d9d9" stroke-width="1"/><text x="351.7" y="404.40" text-anchor="end" font-family="Liberation Sans" font-size="8.3" fill="#595959">0</text><line x1="360.2" y1="376.90" x2="671.4" y2="376.90" stroke="#d9d9d9" stroke-width="1"/><text x="351.7" y="379.90" text-anchor="end" font-family="Liberation Sans" font-size="8.3" fill="#595959">20000</text><line x1="360.2" y1="352.40" x2="671.4" y2="352.40" stroke="#d9d9d9" stroke-width="1"/><text x="351.7" y="355.40" text-anchor="end" font-family="Liberation Sans" font-size="8.3" fill="#595959">40000</text><line x1="360.2" y1="327.90" x2="671.4" y2="327.90" stroke="#d9d9d9" stroke-width="1"/><text x="351.7" y="330.90" text-anchor="end" font-family="Liberation Sans" font-size="8.3" fill="#595959">60000</text><line x1="360.2" y1="303.40" x2="671.4" y2="303.40" stroke="#d9d9d9" stroke-width="1"/><text x="351.7" y="306.40" text-anchor="end" font-family="Liberation Sans" font-size="8.3" fill="#595959">80000</text><line x1="360.2" y1="278.90" x2="671.4" y2="278.90" stroke="#d9d9d9" stroke-width="1"/><text x="351.7" y="281.90" text-anchor="end" font-family="Liberation Sans" font-size="8.3" fill="#595959">100000</text><line x1="360.2" y1="254.40" x2="671.4" y2="254.40" stroke="#d9d9d9" stroke-width="1"/><text x="351.7" y="257.40" text-anchor="end" font-family="Liberation Sans" font-size="8.3" fill="#595959">120000</text><rect x="370.76" y="327.90" width="10" height="73.50" fill="#5394d4"/><text x="376.26" y="341.40" text-anchor="middle" font-family="Liberation Sans" font-size="8" fill="#404040" stroke="#404040" stroke-width="0.3">60000</text><text x="375.76" y="416.20" text-anchor="middle" font-family="Liberation Sans" font-size="8.2" fill="#595959">Amit</text><text x="375.76" y="427.40" text-anchor="middle" font-family="Liberation Sans" font-size="8.2" fill="#595959">Kumar</text><rect x="401.88" y="348.72" width="10" height="52.68" fill="#5394d4"/><text x="407.38" y="362.22" text-anchor="middle" font-family="Liberation Sans" font-size="8" fill="#404040" stroke="#404040" stroke-width="0.3">43000</text><text x="406.88" y="416.20" text-anchor="middle" font-family="Liberation Sans" font-size="8.2" fill="#595959">Faiz</text><text x="406.88" y="427.40" text-anchor="middle" font-family="Liberation Sans" font-size="8.2" fill="#595959">Ahmed</text><rect x="433.00" y="308.30" width="10" height="93.10" fill="#5394d4"/><text x="438.50" y="321.80" text-anchor="middle" font-family="Liberation Sans" font-size="8" fill="#404040" stroke="#404040" stroke-width="0.3">76000</text><text x="438.00" y="416.20" text-anchor="middle" font-family="Liberation Sans" font-size="8.2" fill="#595959">Gaurav</text><text x="438.00" y="427.40" text-anchor="middle" font-family="Liberation Sans" font-size="8.2" fill="#595959">Rawat</text><rect x="464.12" y="332.80" width="10" height="68.60" fill="#5394d4"/><text x="469.62" y="346.30" text-anchor="middle" font-family="Liberation Sans" font-size="8" fill="#404040" stroke="#404040" stroke-width="0.3">56000</text><text x="469.12" y="416.20" text-anchor="middle" font-family="Liberation Sans" font-size="8.2" fill="#595959">Versha</text><text x="469.12" y="427.40" text-anchor="middle" font-family="Liberation Sans" font-size="8.2" fill="#595959">Tewatia</text><rect x="495.24" y="303.40" width="10" height="98.00" fill="#5394d4"/><text x="500.74" y="316.90" text-anchor="middle" font-family="Liberation Sans" font-size="8" fill="#404040" stroke="#404040" stroke-width="0.3">80000</text><text x="500.24" y="416.20" text-anchor="middle" font-family="Liberation Sans" font-size="8.2" fill="#595959">Hitesh</text><text x="500.24" y="427.40" text-anchor="middle" font-family="Liberation Sans" font-size="8.2" fill="#595959">Kumar</text><rect x="526.36" y="294.82" width="10" height="106.57" fill="#5394d4"/><text x="531.86" y="308.32" text-anchor="middle" font-family="Liberation Sans" font-size="8" fill="#404040" stroke="#404040" stroke-width="0.3">87000</text><text x="531.36" y="416.20" text-anchor="middle" font-family="Liberation Sans" font-size="8.2" fill="#595959">Troy</text><text x="531.36" y="427.40" text-anchor="middle" font-family="Liberation Sans" font-size="8.2" fill="#595959">Stotts</text><rect x="557.48" y="335.25" width="10" height="66.15" fill="#5394d4"/><text x="562.98" y="348.75" text-anchor="middle" font-family="Liberation Sans" font-size="8" fill="#404040" stroke="#404040" stroke-width="0.3">54000</text><text x="562.48" y="416.20" text-anchor="middle" font-family="Liberation Sans" font-size="8.2" fill="#595959">Jiya</text><text x="562.48" y="427.40" text-anchor="middle" font-family="Liberation Sans" font-size="8.2" fill="#595959">Khan</text><rect x="588.60" y="281.35" width="10" height="120.05" fill="#5394d4"/><text x="594.10" y="294.85" text-anchor="middle" font-family="Liberation Sans" font-size="8" fill="#404040" stroke="#404040" stroke-width="0.3">98000</text><text x="593.60" y="416.20" text-anchor="middle" font-family="Liberation Sans" font-size="8.2" fill="#595959">Sultan</text><text x="593.60" y="427.40" text-anchor="middle" font-family="Liberation Sans" font-size="8.2" fill="#595959">Alam</text><rect x="619.72" y="309.52" width="10" height="91.88" fill="#5394d4"/><text x="625.22" y="323.02" text-anchor="middle" font-family="Liberation Sans" font-size="8" fill="#404040" stroke="#404040" stroke-width="0.3">75000</text><text x="624.72" y="416.20" text-anchor="middle" font-family="Liberation Sans" font-size="8.2" fill="#595959">Manoj</text><text x="624.72" y="427.40" text-anchor="middle" font-family="Liberation Sans" font-size="8.2" fill="#595959">Singh</text><rect x="650.84" y="362.20" width="10" height="39.20" fill="#5394d4"/><text x="656.34" y="375.70" text-anchor="middle" font-family="Liberation Sans" font-size="8" fill="#404040" stroke="#404040" stroke-width="0.3">32000</text><text x="655.84" y="416.20" text-anchor="middle" font-family="Liberation Sans" font-size="8.2" fill="#595959">Harry</text><text x="655.84" y="427.40" text-anchor="middle" font-family="Liberation Sans" font-size="8.2" fill="#595959">Smith</text><text x="500" y="239.3" text-anchor="middle" font-family="Liberation Sans" font-size="12.6" fill="#595959">Salary</text><rect x="317.6" y="217.6" width="364.70" height="218.40" fill="none" stroke="#b3b3b3" stroke-width="1.2"/><rect x="360.2" y="254.4" width="311.20" height="147.00" fill="none" stroke="#c3c3c3" stroke-width="1.6"/><circle cx="317.60" cy="217.60" r="3.6" fill="#fff" stroke="#999" stroke-width="1.3"/><circle cx="499.95" cy="217.60" r="3.6" fill="#fff" stroke="#999" stroke-width="1.3"/><circle cx="682.30" cy="217.60" r="3.6" fill="#fff" stroke="#999" stroke-width="1.3"/><circle cx="317.60" cy="326.80" r="3.6" fill="#fff" stroke="#999" stroke-width="1.3"/><circle cx="682.30" cy="326.80" r="3.6" fill="#fff" stroke="#999" stroke-width="1.3"/><circle cx="317.60" cy="436.00" r="3.6" fill="#fff" stroke="#999" stroke-width="1.3"/><circle cx="499.95" cy="436.00" r="3.6" fill="#fff" stroke="#999" stroke-width="1.3"/><circle cx="682.30" cy="436.00" r="3.6" fill="#fff" stroke="#999" stroke-width="1.3"/><circle cx="360.20" cy="254.40" r="3.6" fill="#fff" stroke="#999" stroke-width="1.3"/><circle cx="515.80" cy="254.40" r="3.6" fill="#fff" stroke="#999" stroke-width="1.3"/><circle cx="671.40" cy="254.40" r="3.6" fill="#fff" stroke="#999" stroke-width="1.3"/><circle cx="360.20" cy="327.90" r="3.6" fill="#fff" stroke="#999" stroke-width="1.3"/><circle cx="671.40" cy="327.90" r="3.6" fill="#fff" stroke="#999" stroke-width="1.3"/><circle cx="360.20" cy="401.40" r="3.6" fill="#fff" stroke="#999" stroke-width="1.3"/><circle cx="515.80" cy="401.40" r="3.6" fill="#fff" stroke="#999" stroke-width="1.3"/><circle cx="671.40" cy="401.40" r="3.6" fill="#fff" stroke="#999" stroke-width="1.3"/></svg><div style="position:absolute;left:691.5px;top:217px;width:22px;height:21px;background:#fff;border:1px solid #dedede;box-sizing:border-box"></div><div style="position:absolute;left:691.5px;top:245.8px;width:22px;height:21px;background:#fff;border:1px solid #dedede;box-sizing:border-box"></div><div style="position:absolute;left:691.5px;top:274.6px;width:22px;height:21px;background:#fff;border:1px solid #dedede;box-sizing:border-box"></div><svg style="position:absolute;left:695px;top:220px;" width="14" height="14" viewBox="0 0 14 14"><path d="M7 2 V12.5 M1.8 7.3 H12.2" stroke="#4f8d6b" stroke-width="3"/></svg><svg style="position:absolute;left:692px;top:246px;" width="20" height="20" viewBox="0 0 20 20"><path d="M15.8 4.2 L10.5 9.5" stroke="#5a5a5a" stroke-width="3.2" stroke-linecap="round"/><path d="M9 8.5 L11.8 11.2 L8.5 14.5 Q6.5 16.2 3.5 16.5 Q4 13.5 5.8 11.7 Z" fill="#6a6a6a"/></svg><svg style="position:absolute;left:695px;top:278px;" width="16" height="15" viewBox="0 0 16 15"><path d="M1 1 H15 L9.5 7 V14 L6.5 12.5 V7 Z" fill="#606060"/></svg><div style="position:absolute;left:0px;top:480.5px;width:720px;height:19.5px;background:#e6e6e6"></div><div style="position:absolute;left:0px;top:480.5px;width:720px;height:1px;background:#cfcfcf"></div><svg style="position:absolute;left:14px;top:487px;" width="6" height="7" viewBox="0 0 6 7"><path d="M5 0.5 L1 3.5 L5 6.5 Z" fill="#c4c4c4"/></svg><svg style="position:absolute;left:31px;top:487px;" width="6" height="7" viewBox="0 0 6 7"><path d="M1 0.5 L5 3.5 L1 6.5 Z" fill="#c4c4c4"/></svg><div style="position:absolute;left:59.5px;top:483px;width:1px;height:14px;background:#c8c8c8"></div><div style="position:absolute;left:72px;top:483.46px;line-height:11.88px;font-size:9.9px;color:#444;font-weight:400;white-space:nowrap;">Seprate First Name &amp; Last Name</div><div style="position:absolute;left:227.5px;top:480.5px;width:46px;height:19px;background:#fff;border-bottom:1.5px solid #217346;box-sizing:border-box"></div><div style="position:absolute;left:250.5px;transform:translateX(-50%);top:483.32px;line-height:11.76px;font-size:9.8px;color:#217346;font-weight:700;white-space:nowrap;">Sheet1</div><div style="position:absolute;left:226.5px;top:481px;width:1px;height:19px;background:#cfcfcf"></div><div style="position:absolute;left:274px;top:481px;width:1px;height:19px;background:#cfcfcf"></div><div style="position:absolute;left:286px;top:483.46px;line-height:11.88px;font-size:9.9px;color:#444;font-weight:400;white-space:nowrap;">Combind First Name &amp; Last Name</div><div style="position:absolute;left:448px;top:483px;width:1px;height:14px;background:#c8c8c8"></div><svg style="position:absolute;left:469px;top:484.5px;" width="11" height="11" viewBox="0 0 11 11"><circle cx="5.5" cy="5.5" r="4.5" fill="none" stroke="#999" stroke-width="1"/><path d="M5.5 3.5 V7.5 M3.5 5.5 H7.5" stroke="#999" stroke-width="1"/></svg><div style="position:absolute;left:580.5px;top:485px;width:1px;height:10px;background:#c8c8c8"></div><div style="position:absolute;left:605px;top:482.5px;width:115px;height:16px;background:#fff;border:1px solid #d8d8d8;box-sizing:border-box"></div><svg style="position:absolute;left:596px;top:487px;" width="5" height="7" viewBox="0 0 5 7"><path d="M4.5 0.5 L0.5 3.5 L4.5 6.5 Z" fill="#666"/></svg><div style="position:absolute;left:0px;top:500px;width:720px;height:16px;background:#f0f0f0"></div><div style="position:absolute;left:3.3px;top:502.90px;line-height:9.60px;font-size:8.0px;color:#555;font-weight:400;white-space:nowrap;transform:scaleX(0.9040);transform-origin:0 50%;">Ready</div><div style="position:absolute;left:586.7px;top:502.90px;line-height:9.60px;font-size:8.0px;color:#777;font-weight:400;white-space:nowrap;transform:scaleX(0.9641);transform-origin:0 50%;">Average: 66100</div><div style="position:absolute;left:674.4px;top:502.90px;line-height:9.60px;font-size:8.0px;color:#777;font-weight:400;white-space:nowrap;transform:scaleX(0.9620);transform-origin:0 50%;">Count: 22</div><div style="position:absolute;left:715px;top:502.58px;line-height:9.84px;font-size:8.2px;color:#777;font-weight:400;white-space:nowrap;">S</div>
</div></body></html>
